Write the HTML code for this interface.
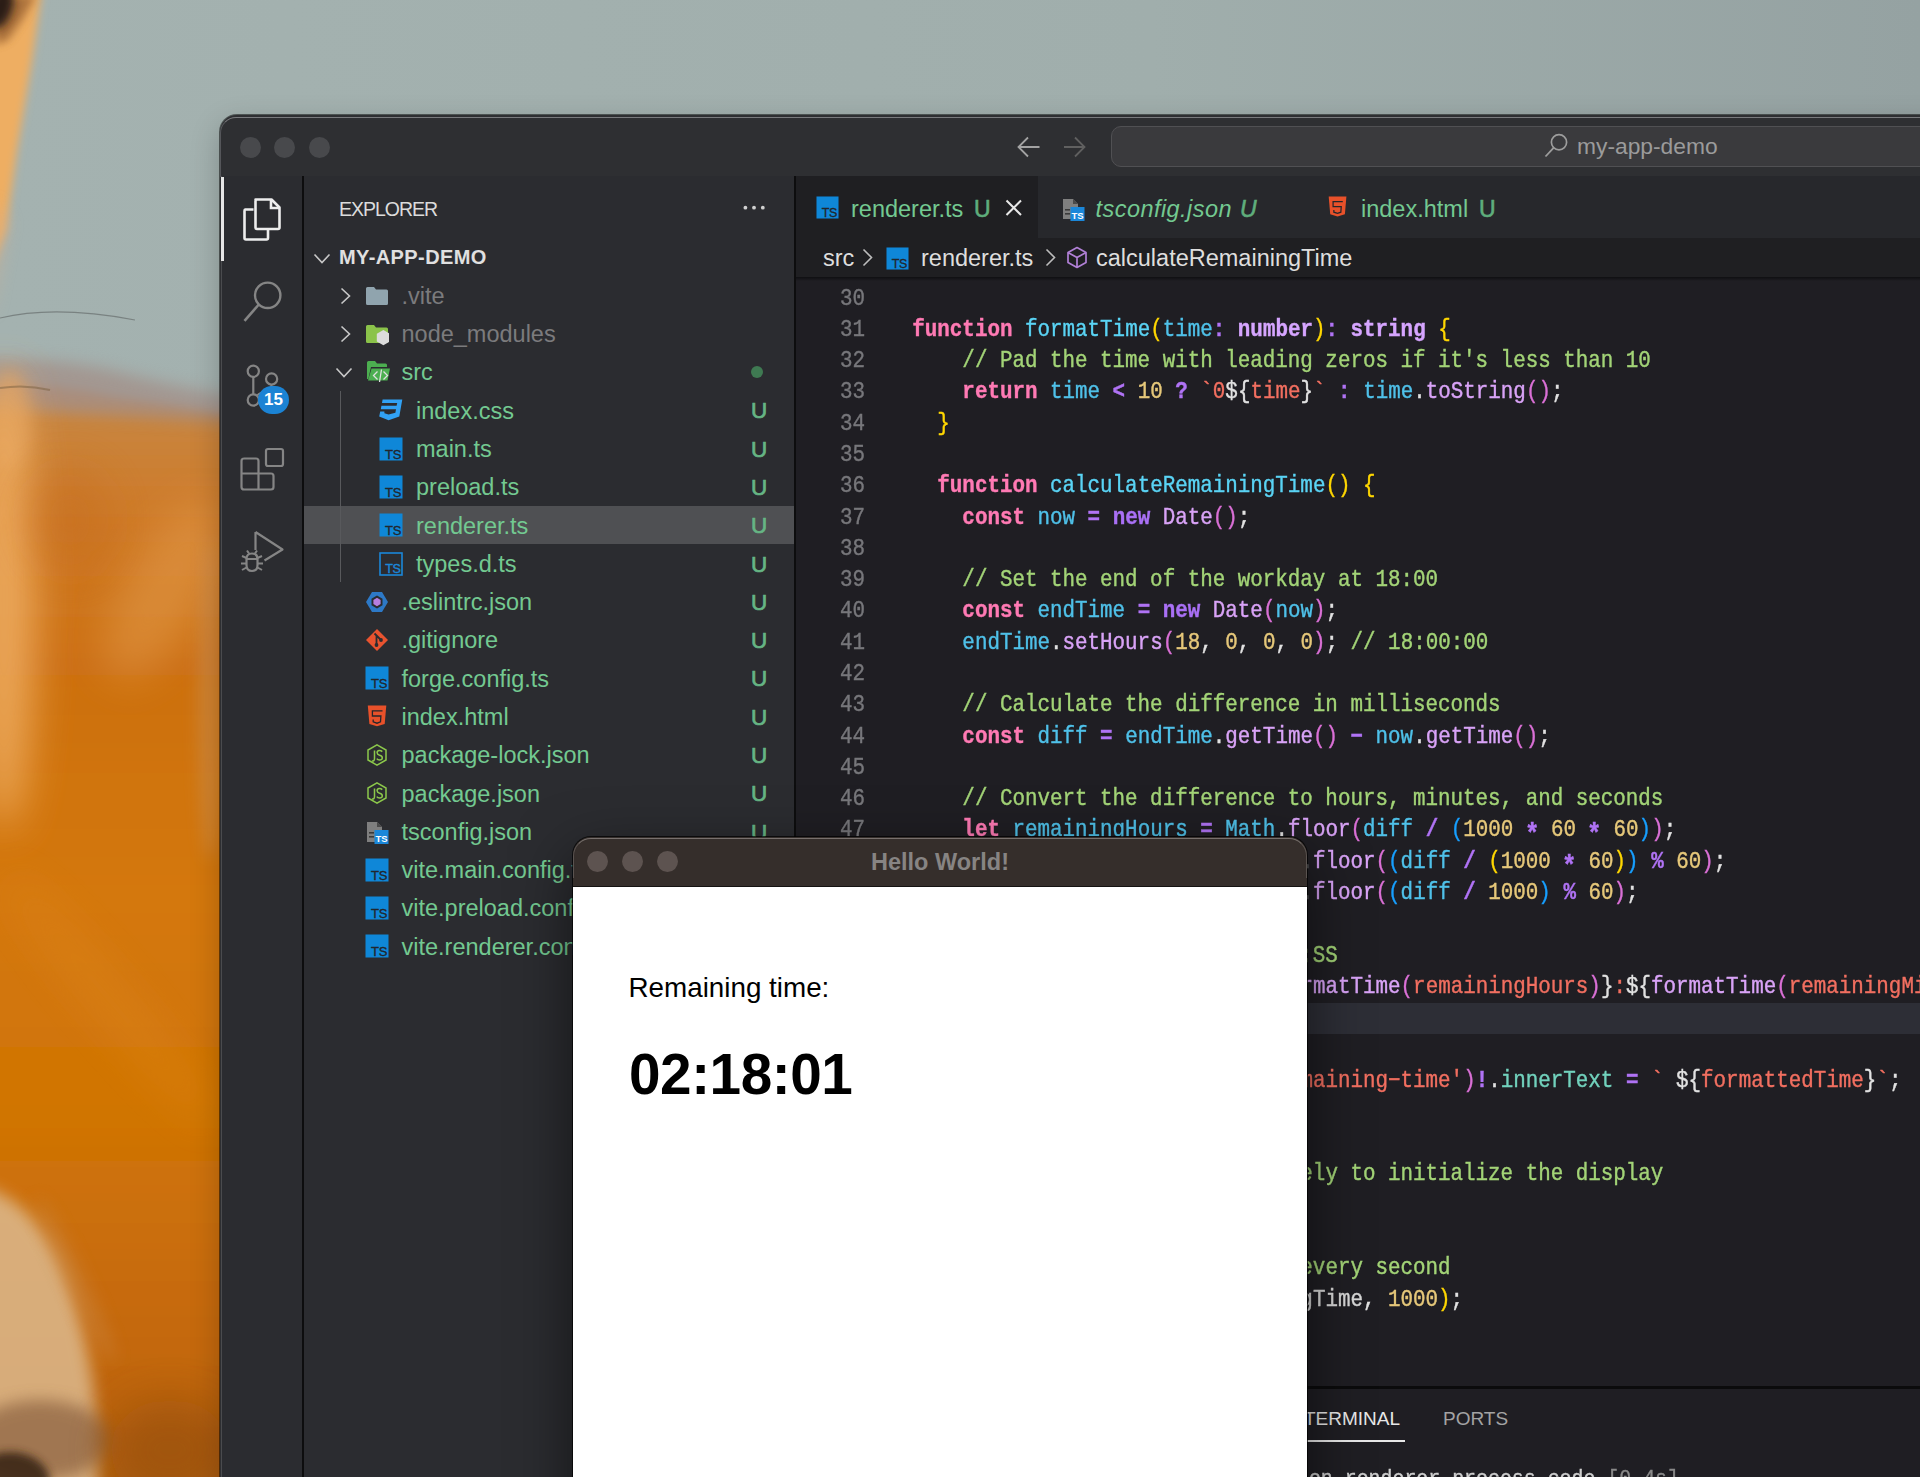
<!DOCTYPE html><html><head><meta charset="utf-8"><style>
*{margin:0;padding:0;box-sizing:border-box}
html,body{width:1920px;height:1477px;overflow:hidden;position:relative;font-family:"Liberation Sans",sans-serif;background:#a2b0ae}
.a{position:absolute}
.ui{font-family:"Liberation Sans",sans-serif;font-size:23.5px;white-space:pre;line-height:1}
.mono{font-family:"Liberation Mono",monospace;font-size:20.87px;white-space:pre;line-height:31.28px;transform:scaleY(1.15);transform-origin:0 21px;-webkit-text-stroke:0.35px currentColor}
.kw{color:#ff7ab4;font-weight:700}.nw{color:#a970f5;font-weight:700}.ty{color:#d6a5ff;font-weight:700}
.fn{color:#5ad4f5}.vr{color:#4fc1e9}.me{color:#d9a3f7}.cm{color:#a3d477}.nu{color:#e6c87a}.st{color:#f26f60}
.op{color:#b073f5;font-weight:700}.p1{color:#ffd700}.p2{color:#da70d6}.p3{color:#179fff}.w{color:#e2e2e2}.te{color:#72d2bd}.wh2{color:#d8d8d8}
.ln{color:#77777b;text-align:right;width:60px}
.gr{color:#73c991}
.ast{color:#b073f5;font-weight:700;display:inline-block;transform:translateY(4px) scale(1.15)}
</style></head><body>
<svg class="a" style="left:0;top:0" width="1920" height="1477" viewBox="0 0 1920 1477">
<defs>
<linearGradient id="sky" x1="0" y1="0" x2="1" y2="0"><stop offset="0" stop-color="#a4b2b0"/><stop offset="0.6" stop-color="#a0aeac"/><stop offset="1" stop-color="#95a2a2"/></linearGradient>
<linearGradient id="fur" x1="0" y1="0" x2="0" y2="1"><stop offset="0" stop-color="#b89478"/><stop offset="0.03" stop-color="#c8853f"/><stop offset="0.12" stop-color="#cf7a28"/><stop offset="0.25" stop-color="#cc7012"/><stop offset="0.45" stop-color="#d47808"/><stop offset="0.65" stop-color="#d07406"/><stop offset="0.85" stop-color="#c4680a"/><stop offset="1" stop-color="#a85a10"/></linearGradient>
<filter id="b8" x="-150%" y="-150%" width="400%" height="400%"><feGaussianBlur stdDeviation="8"/></filter>
<filter id="b20" x="-150%" y="-150%" width="400%" height="400%"><feGaussianBlur stdDeviation="20"/></filter>
<filter id="b4" x="-150%" y="-150%" width="400%" height="400%"><feGaussianBlur stdDeviation="4"/></filter>
</defs>
<rect width="1920" height="1477" fill="url(#sky)"/>
<path d="M-40 385 Q40 380 110 396 Q180 405 260 418 L260 1520 L-40 1520 Z" fill="url(#fur)" filter="url(#b4)"/>
<path d="M-40 360 Q60 355 130 375 Q200 392 260 400 L260 425 L-40 405 Z" fill="#a38e86" opacity="0.75" filter="url(#b8)"/><ellipse cx="10" cy="420" rx="20" ry="50" fill="#e0a060" opacity="0.6" filter="url(#b8)"/>
<ellipse cx="4" cy="600" rx="30" ry="230" fill="#efae64" opacity="0.9" filter="url(#b20)"/>
<ellipse cx="165" cy="590" rx="40" ry="100" fill="#e6a255" opacity="0.45" filter="url(#b20)" transform="rotate(30 165 590)"/>
<ellipse cx="70" cy="520" rx="40" ry="50" fill="#c46c1c" opacity="0.45" filter="url(#b20)"/>
<ellipse cx="110" cy="1000" rx="18" ry="160" fill="#e08a20" opacity="0.4" filter="url(#b20)" transform="rotate(-40 110 1000)"/>
<ellipse cx="210" cy="700" rx="12" ry="160" fill="#d49a60" opacity="0.45" filter="url(#b8)"/>
<path d="M-20 1185 Q30 1200 60 1260 Q85 1320 95 1400 L100 1520 L-20 1520 Z" fill="#dcb98e" opacity="0.85" filter="url(#b8)"/>
<ellipse cx="75" cy="1280" rx="10" ry="90" fill="#c98540" opacity="0.5" filter="url(#b8)" transform="rotate(-25 75 1280)"/>
<ellipse cx="40" cy="1440" rx="70" ry="40" fill="#8a6040" opacity="0.7" filter="url(#b8)"/>
<ellipse cx="10" cy="1482" rx="40" ry="30" fill="#3a2818" opacity="0.9" filter="url(#b4)"/>
<ellipse cx="170" cy="1450" rx="60" ry="50" fill="#96500e" opacity="0.6" filter="url(#b20)"/>
<path d="M-10 -10 L42 -10 L32 60 L17 150 L6 230 L-10 270 Z" fill="#eeae62" filter="url(#b4)"/><path d="M-10 200 L8 220 L-10 320 Z" fill="#d8ae88" opacity="0.5" filter="url(#b8)"/>
<path d="M-5 -5 L36 -5 L22 20 L8 40 L-5 45 Z" fill="#9a6230" opacity="0.8" filter="url(#b4)"/><ellipse cx="0" cy="8" rx="12" ry="22" fill="#2a1c12" filter="url(#b4)" transform="rotate(20 0 8)"/>
<path d="M0 318 Q55 305 135 320" stroke="#5e6362" stroke-width="1.2" fill="none" opacity="0.6"/>
<path d="M0 388 Q25 384 50 390" stroke="#7a6040" stroke-width="2" fill="none" opacity="0.5"/>
</svg>
<div class="a" style="left:220px;top:115px;width:1760px;height:1420px;border-radius:17px;background:#2e2f32;box-shadow:0 0 0 1px rgba(0,0,0,.5),0 10px 30px rgba(0,0,0,.22)"></div>
<div class="a" style="left:220px;top:116.5px;width:1760px;height:60px;border-radius:16px 0 0 0;border-top:1.5px solid #7a7b7e;border-left:1px solid #55565a"></div>
<div class="a" style="left:239.8px;top:136.9px;width:21px;height:21px;border-radius:50%;background:#48494c"></div>
<div class="a" style="left:274.3px;top:136.9px;width:21px;height:21px;border-radius:50%;background:#48494c"></div>
<div class="a" style="left:308.8px;top:136.9px;width:21px;height:21px;border-radius:50%;background:#48494c"></div>
<svg class="a" style="left:1010px;top:130px" width="90" height="34" viewBox="0 0 90 34"><path d="M9 17 H29.5 M18 7.5 L8.5 17 L18 26.5" stroke="#a3a3a3" stroke-width="1.8" fill="none"/><path d="M54 17 H74.5 M65 7.5 L74.5 17 L65 26.5" stroke="#606060" stroke-width="1.8" fill="none"/></svg>
<div class="a" style="left:1110.5px;top:125.6px;width:900px;height:41.2px;border-radius:10px;background:#3a3a3d;border:1.5px solid #505053"></div>
<svg class="a" style="left:1540px;top:130px" width="32" height="32" viewBox="0 0 32 32"><circle cx="19" cy="12.3" r="7.6" stroke="#9d9d9d" stroke-width="1.7" fill="none"/><path d="M13.6 17.8 L5.5 26.5" stroke="#9d9d9d" stroke-width="1.8"/></svg>
<div class="a ui" style="left:1577px;top:134.5px;font-size:22.8px;color:#9b9b9b">my-app-demo</div>
<div class="a" style="left:221px;top:175.5px;width:1700px;height:1px;background:#252629"></div>
<div class="a" style="left:221px;top:176px;width:81px;height:1310px;background:#2b2c30"></div>
<div class="a" style="left:221px;top:176px;width:1px;height:1310px;background:#4a4b4e"></div>
<div class="a" style="left:302px;top:176px;width:2px;height:1310px;background:#0d0d0e"></div>
<div class="a" style="left:221px;top:177px;width:3px;height:84px;background:#e6e6e6"></div>
<svg class="a" style="left:236px;top:192px" width="52" height="54" viewBox="0 0 52 54"><path d="M9 17.5 H17.5 M9 17.5 Q8.5 17.5 8.5 19 V46 Q8.5 47.5 10 47.5 H30.5 Q32 47.5 32 46 V37.5" stroke="#ededed" stroke-width="2.6" fill="none"/><path d="M19.5 7.5 H35.5 L43.5 15.5 V35.5 Q43.5 37 42 37 H21 Q19.5 37 19.5 35.5 V9 Q19.5 7.5 21 7.5 Z" stroke="#ededed" stroke-width="2.6" fill="none" stroke-linejoin="round"/><path d="M35 8 V16 H43" stroke="#ededed" stroke-width="2.6" fill="none"/></svg>
<svg class="a" style="left:236px;top:272px" width="52" height="56" viewBox="0 0 52 56"><circle cx="31.7" cy="23.3" r="12.7" stroke="#858585" stroke-width="2.4" fill="none"/><path d="M22.8 32.5 L8.5 48.8" stroke="#858585" stroke-width="2.6"/></svg>
<svg class="a" style="left:236px;top:356px" width="60" height="64" viewBox="0 0 60 64"><circle cx="17.3" cy="15.3" r="5.6" stroke="#858585" stroke-width="2.2" fill="none"/><circle cx="35.6" cy="22.9" r="5.6" stroke="#858585" stroke-width="2.2" fill="none"/><circle cx="17.3" cy="44" r="5.6" stroke="#858585" stroke-width="2.2" fill="none"/><path d="M17.3 21 V38.4 M35.6 28.5 Q35.6 34 28 36 Q21 38 21.5 40" stroke="#858585" stroke-width="2.2" fill="none"/></svg>
<div class="a" style="left:258px;top:385.5px;width:31px;height:28px;border-radius:14px;background:#1b83d4"></div>
<div class="a" style="left:258px;top:389px;width:31px;text-align:center;font-size:17px;font-weight:700;color:#fff;line-height:21px">15</div>
<svg class="a" style="left:236px;top:444px" width="52" height="52" viewBox="0 0 52 52"><rect x="30" y="5" width="17" height="17" rx="2" stroke="#858585" stroke-width="2.2" fill="none"/><path d="M7.5 14.5 H20 Q22.5 14.5 22.5 17 V29.5 H35 Q37.5 29.5 37.5 32 V43 Q37.5 45.5 35 45.5 H8 Q5.5 45.5 5.5 43 V17 Q5.5 14.5 8 14.5 Z M5.5 29.5 H22.5 V45.5" stroke="#858585" stroke-width="2.2" fill="none"/></svg>
<svg class="a" style="left:236px;top:526px" width="56" height="56" viewBox="0 0 56 56"><path d="M19.5 6 L46.5 23.5 L28.5 34.5 M19.5 6 V24" stroke="#858585" stroke-width="2.2" fill="none" stroke-linejoin="round"/><path d="M10.5 33 Q10.5 27.5 16 27.5 Q21.5 27.5 21.5 33 V39 Q21.5 45 16 45 Q10.5 45 10.5 39 Z" stroke="#858585" stroke-width="2.2" fill="none"/><path d="M10.5 33 H21.5 M6 30 L10.5 32 M6 44 L10.5 41.5 M26 30 L21.5 32 M26 44 L21.5 41.5 M5 37.5 H10.5 M21.5 37.5 H27 M13 27.5 L11 24.5 M19 27.5 L21 24.5" stroke="#858585" stroke-width="2" fill="none"/></svg>
<div class="a" style="left:304px;top:176px;width:490px;height:1310px;background:#2b2c30"></div>
<div class="a" style="left:794px;top:176px;width:2px;height:1310px;background:#0d0d0e"></div>
<div class="a ui" style="left:339px;top:199.5px;font-size:19.5px;letter-spacing:-1px;color:#dcdcdc">EXPLORER</div>
<svg class="a" style="left:735px;top:198px" width="40" height="20" viewBox="0 0 40 20"><circle cx="10.4" cy="9.7" r="1.9" fill="#d0d0d0"/><circle cx="19" cy="9.7" r="1.9" fill="#d0d0d0"/><circle cx="27.8" cy="9.7" r="1.9" fill="#d0d0d0"/></svg>
<div class="a" style="left:304px;top:505.8px;width:490px;height:38px;background:#4f5053"></div>
<div class="a" style="left:339.5px;top:391px;width:1.2px;height:191px;background:#58595c"></div>
<svg class="a" style="left:312.5px;top:252.8px" width="20" height="12" viewBox="0 0 20 12"><path d="M1.5 1.5 L9 9.5 L16.5 1.5" stroke="#c8c8c8" stroke-width="1.6" fill="none"/></svg>
<div class="a ui" style="left:339px;top:247.3px;font-size:20px;font-weight:700;letter-spacing:0.4px;color:#e0e0e0">MY-APP-DEMO</div>
<svg class="a" style="left:339.5px;top:286.58000000000004px" width="12" height="20" viewBox="0 0 12 20"><path d="M1.5 1.5 L9.5 9 L1.5 16.5" stroke="#c8c8c8" stroke-width="1.6" fill="none"/></svg>
<svg class="a" style="left:365px;top:283.58000000000004px" width="24" height="24" viewBox="0 0 24 24"><path d="M1 4.5 Q1 3 2.5 3 H9 L11 5.5 H21.5 Q23 5.5 23 7 V19.5 Q23 21 21.5 21 H2.5 Q1 21 1 19.5 Z" fill="#90a4ae"/></svg>
<div class="a ui" style="left:401.5px;top:284.88000000000005px;color:#7b7b7d">.vite</div>
<svg class="a" style="left:339.5px;top:324.86px" width="12" height="20" viewBox="0 0 12 20"><path d="M1.5 1.5 L9.5 9 L1.5 16.5" stroke="#c8c8c8" stroke-width="1.6" fill="none"/></svg>
<svg class="a" style="left:365px;top:321.86px" width="24" height="24" viewBox="0 0 24 24"><path d="M1 4.5 Q1 3 2.5 3 H9 L11 5.5 H21.5 Q23 5.5 23 7 V19.5 Q23 21 21.5 21 H2.5 Q1 21 1 19.5 Z" fill="#8bc34a"/><path d="M18.4 7.9 L25 11.75 V19.45 L18.4 23.3 L11.8 19.45 V11.75 Z" fill="#dcdcdc"/></svg>
<div class="a ui" style="left:401.5px;top:323.16px;color:#7b7b7d">node_modules</div>
<svg class="a" style="left:334.5px;top:367.14px" width="20" height="12" viewBox="0 0 20 12"><path d="M1.5 1.5 L9 9.5 L16.5 1.5" stroke="#c8c8c8" stroke-width="1.6" fill="none"/></svg>
<svg class="a" style="left:366px;top:360.14px" width="24" height="24" viewBox="0 0 24 24"><path d="M1 2.5 Q1 1 2.5 1 H9 L11 3.5 H19.5 Q21 3.5 21 5 V7 H5 L2.3 19 H1 Z" fill="#4caf50"/><path d="M5.5 8.5 H24 L21.5 20.5 H2 Z" fill="#4caf50"/><path d="M11.5 11.5 L7.5 15.5 L11.5 19.5 M17.5 11.5 L21.5 15.5 L17.5 19.5 M15.5 9.5 L13.5 22" stroke="#e0e0e0" stroke-width="1.3" fill="none"/></svg>
<div class="a ui" style="left:401.5px;top:361.44px;color:#73c991">src</div>
<div class="a" style="left:751px;top:365.64px;width:12px;height:12px;border-radius:50%;background:#3f7a52"></div>
<svg class="a" style="left:379px;top:398.42px" width="24" height="24" viewBox="0 0 24 24"><path d="M3.6 1.4 H23.3 L20.3 18.6 L9.6 22.2 L0.2 18.6 L1.2 13.6 H5.4 L5.4 15.2 L9.6 16.6 L16.4 14.8 L17 11.2 H1.8 L2.4 7.8 H17.6 L18.2 4.9 H3 Z" fill="#31a2f5"/></svg>
<div class="a ui" style="left:416px;top:399.72px;color:#73c991">index.css</div>
<div class="a ui" style="left:751px;top:400.42px;color:#66b584;font-size:22.5px;-webkit-text-stroke:0.7px #66b584">U</div>
<svg class="a" style="left:379px;top:436.70000000000005px" width="24" height="24" viewBox="0 0 24 24"><rect x="0.5" y="0.5" width="23" height="23" fill="#0f87d8"/><text x="22" y="21.8" text-anchor="end" font-family="Liberation Sans" font-size="13" fill="#22262c" stroke="#22262c" stroke-width="0.35" letter-spacing="-0.3">TS</text></svg>
<div class="a ui" style="left:416px;top:438.00000000000006px;color:#73c991">main.ts</div>
<div class="a ui" style="left:751px;top:438.70000000000005px;color:#66b584;font-size:22.5px;-webkit-text-stroke:0.7px #66b584">U</div>
<svg class="a" style="left:379px;top:474.98px" width="24" height="24" viewBox="0 0 24 24"><rect x="0.5" y="0.5" width="23" height="23" fill="#0f87d8"/><text x="22" y="21.8" text-anchor="end" font-family="Liberation Sans" font-size="13" fill="#22262c" stroke="#22262c" stroke-width="0.35" letter-spacing="-0.3">TS</text></svg>
<div class="a ui" style="left:416px;top:476.28000000000003px;color:#73c991">preload.ts</div>
<div class="a ui" style="left:751px;top:476.98px;color:#66b584;font-size:22.5px;-webkit-text-stroke:0.7px #66b584">U</div>
<svg class="a" style="left:379px;top:513.26px" width="24" height="24" viewBox="0 0 24 24"><rect x="0.5" y="0.5" width="23" height="23" fill="#0f87d8"/><text x="22" y="21.8" text-anchor="end" font-family="Liberation Sans" font-size="13" fill="#22262c" stroke="#22262c" stroke-width="0.35" letter-spacing="-0.3">TS</text></svg>
<div class="a ui" style="left:416px;top:514.56px;color:#73c991">renderer.ts</div>
<div class="a ui" style="left:751px;top:515.26px;color:#66b584;font-size:22.5px;-webkit-text-stroke:0.7px #66b584">U</div>
<svg class="a" style="left:379px;top:551.54px" width="24" height="24" viewBox="0 0 24 24"><rect x="1" y="1" width="22" height="22" fill="none" stroke="#1b87d9" stroke-width="1.6"/><text x="21.5" y="21" text-anchor="end" font-family="Liberation Sans" font-size="12.5" fill="#1b87d9" stroke="#1b87d9" stroke-width="0.4" letter-spacing="-0.3">TS</text></svg>
<div class="a ui" style="left:416px;top:552.8399999999999px;color:#73c991">types.d.ts</div>
<div class="a ui" style="left:751px;top:553.54px;color:#66b584;font-size:22.5px;-webkit-text-stroke:0.7px #66b584">U</div>
<svg class="a" style="left:365px;top:589.8199999999999px" width="24" height="24" viewBox="0 0 24 24"><path d="M7 2 H17 L23 12 L17 22 H7 L1 12 Z" fill="#2d79c7"/><path d="M12 5.5 L17.5 8.7 V15.3 L12 18.5 L6.5 15.3 V8.7 Z" fill="#2b2c30"/><path d="M12 7.8 L15.6 9.9 V14.1 L12 16.2 L8.4 14.1 V9.9 Z" fill="#b67ee0"/></svg>
<div class="a ui" style="left:401.5px;top:591.1199999999999px;color:#73c991">.eslintrc.json</div>
<div class="a ui" style="left:751px;top:591.8199999999999px;color:#66b584;font-size:22.5px;-webkit-text-stroke:0.7px #66b584">U</div>
<svg class="a" style="left:365px;top:628.1px" width="24" height="24" viewBox="0 0 24 24"><path d="M12 1 L23 12 L12 23 L1 12 Z" fill="#e8532f"/><path d="M9.5 5.5 L11.5 7.5 M11.5 7.5 V17 M11.5 7.5 L16 12" stroke="#2b2c30" stroke-width="1.8" fill="none"/><circle cx="11.5" cy="17" r="1.9" fill="#2b2c30"/><circle cx="16" cy="12" r="1.9" fill="#2b2c30"/></svg>
<div class="a ui" style="left:401.5px;top:629.4px;color:#73c991">.gitignore</div>
<div class="a ui" style="left:751px;top:630.1px;color:#66b584;font-size:22.5px;-webkit-text-stroke:0.7px #66b584">U</div>
<svg class="a" style="left:365px;top:666.3800000000001px" width="24" height="24" viewBox="0 0 24 24"><rect x="0.5" y="0.5" width="23" height="23" fill="#0f87d8"/><text x="22" y="21.8" text-anchor="end" font-family="Liberation Sans" font-size="13" fill="#22262c" stroke="#22262c" stroke-width="0.35" letter-spacing="-0.3">TS</text></svg>
<div class="a ui" style="left:401.5px;top:667.6800000000001px;color:#73c991">forge.config.ts</div>
<div class="a ui" style="left:751px;top:668.3800000000001px;color:#66b584;font-size:22.5px;-webkit-text-stroke:0.7px #66b584">U</div>
<svg class="a" style="left:365px;top:704.6600000000001px" width="24" height="24" viewBox="0 0 24 24"><path d="M2.8 0.5 H21.3 L19.7 19 L12 21.3 L4.4 19 Z" fill="#e8512a"/><path d="M17.5 5.9 H7.4 V11 H15.9 L15.5 16.9 L12 18.2 L8.2 16.9 V14.5" stroke="#24262b" stroke-width="1.3" fill="none"/></svg>
<div class="a ui" style="left:401.5px;top:705.96px;color:#73c991">index.html</div>
<div class="a ui" style="left:751px;top:706.6600000000001px;color:#66b584;font-size:22.5px;-webkit-text-stroke:0.7px #66b584">U</div>
<svg class="a" style="left:365px;top:742.94px" width="24" height="24" viewBox="0 0 24 24"><path d="M12 1.8 L21 7 V17 L12 22.2 L3 17 V7 Z" fill="none" stroke="#8cc84b" stroke-width="1.5"/><path d="M9.5 7.5 V15.5 Q9.5 18.5 6.8 18" stroke="#8cc84b" stroke-width="1.5" fill="none"/><path d="M17.3 8.6 Q16 7.5 14.2 7.6 Q12 7.8 12.1 9.8 Q12.2 11.6 14.6 12.2 Q17.4 12.9 17.3 15 Q17.2 17 14.6 17 Q12.6 17 11.8 15.6" stroke="#8cc84b" stroke-width="1.5" fill="none"/></svg>
<div class="a ui" style="left:401.5px;top:744.24px;color:#73c991">package-lock.json</div>
<div class="a ui" style="left:751px;top:744.94px;color:#66b584;font-size:22.5px;-webkit-text-stroke:0.7px #66b584">U</div>
<svg class="a" style="left:365px;top:781.22px" width="24" height="24" viewBox="0 0 24 24"><path d="M12 1.8 L21 7 V17 L12 22.2 L3 17 V7 Z" fill="none" stroke="#8cc84b" stroke-width="1.5"/><path d="M9.5 7.5 V15.5 Q9.5 18.5 6.8 18" stroke="#8cc84b" stroke-width="1.5" fill="none"/><path d="M17.3 8.6 Q16 7.5 14.2 7.6 Q12 7.8 12.1 9.8 Q12.2 11.6 14.6 12.2 Q17.4 12.9 17.3 15 Q17.2 17 14.6 17 Q12.6 17 11.8 15.6" stroke="#8cc84b" stroke-width="1.5" fill="none"/></svg>
<div class="a ui" style="left:401.5px;top:782.52px;color:#73c991">package.json</div>
<div class="a ui" style="left:751px;top:783.22px;color:#66b584;font-size:22.5px;-webkit-text-stroke:0.7px #66b584">U</div>
<svg class="a" style="left:365px;top:819.5px" width="24" height="24" viewBox="0 0 24 24"><path d="M2 2 H12 L17 7 V22 H2 Z" fill="#7f7f7f"/><path d="M12 2 V7 H17" fill="#4a4a4a"/><rect x="4" y="12" width="5" height="1.6" fill="#3a3a3a"/><rect x="4" y="16" width="5" height="1.6" fill="#3a3a3a"/><rect x="9.5" y="10" width="14" height="14" fill="#1b87d9"/><text x="16.5" y="21.5" text-anchor="middle" font-family="Liberation Sans" font-size="9.5" font-weight="700" fill="#fff">TS</text></svg>
<div class="a ui" style="left:401.5px;top:820.8px;color:#73c991">tsconfig.json</div>
<div class="a ui" style="left:751px;top:821.5px;color:#66b584;font-size:22.5px;-webkit-text-stroke:0.7px #66b584">U</div>
<svg class="a" style="left:365px;top:857.78px" width="24" height="24" viewBox="0 0 24 24"><rect x="0.5" y="0.5" width="23" height="23" fill="#0f87d8"/><text x="22" y="21.8" text-anchor="end" font-family="Liberation Sans" font-size="13" fill="#22262c" stroke="#22262c" stroke-width="0.35" letter-spacing="-0.3">TS</text></svg>
<div class="a ui" style="left:401.5px;top:859.0799999999999px;color:#73c991">vite.main.config.ts</div>
<div class="a ui" style="left:751px;top:859.78px;color:#66b584;font-size:22.5px;-webkit-text-stroke:0.7px #66b584">U</div>
<svg class="a" style="left:365px;top:896.06px" width="24" height="24" viewBox="0 0 24 24"><rect x="0.5" y="0.5" width="23" height="23" fill="#0f87d8"/><text x="22" y="21.8" text-anchor="end" font-family="Liberation Sans" font-size="13" fill="#22262c" stroke="#22262c" stroke-width="0.35" letter-spacing="-0.3">TS</text></svg>
<div class="a ui" style="left:401.5px;top:897.3599999999999px;color:#73c991">vite.preload.config.ts</div>
<div class="a ui" style="left:751px;top:898.06px;color:#66b584;font-size:22.5px;-webkit-text-stroke:0.7px #66b584">U</div>
<svg class="a" style="left:365px;top:934.3399999999999px" width="24" height="24" viewBox="0 0 24 24"><rect x="0.5" y="0.5" width="23" height="23" fill="#0f87d8"/><text x="22" y="21.8" text-anchor="end" font-family="Liberation Sans" font-size="13" fill="#22262c" stroke="#22262c" stroke-width="0.35" letter-spacing="-0.3">TS</text></svg>
<div class="a ui" style="left:401.5px;top:935.6399999999999px;color:#73c991">vite.renderer.config.ts</div>
<div class="a ui" style="left:751px;top:936.3399999999999px;color:#66b584;font-size:22.5px;-webkit-text-stroke:0.7px #66b584">U</div>
<div class="a" style="left:796px;top:176px;width:1124px;height:1310px;background:#1f1e23"></div>
<div class="a" style="left:796px;top:176px;width:1124px;height:62px;background:#27282c"></div>
<div class="a" style="left:796px;top:176px;width:242px;height:62px;background:#1f1f22"></div>
<svg class="a" style="left:815.5px;top:196px" width="23" height="23" viewBox="0 0 24 24"><rect x="0.5" y="0.5" width="23" height="23" fill="#0f87d8"/><text x="22" y="21.8" text-anchor="end" font-family="Liberation Sans" font-size="13" fill="#22262c" stroke="#22262c" stroke-width="0.35" letter-spacing="-0.3">TS</text></svg>
<div class="a ui" style="left:851px;top:197.5px;color:#73c991">renderer.ts</div>
<div class="a ui" style="left:974px;top:197.5px;color:#5fae7c;font-size:23px;-webkit-text-stroke:0.6px #5fae7c">U</div>
<svg class="a" style="left:1004px;top:198px" width="20" height="20" viewBox="0 0 20 20"><path d="M2.5 2.5 L17 17 M17 2.5 L2.5 17" stroke="#e8e8e8" stroke-width="2"/></svg>
<svg class="a" style="left:1060.5px;top:196.5px" width="24" height="24" viewBox="0 0 24 24"><path d="M2 2 H12 L17 7 V22 H2 Z" fill="#7f7f7f"/><path d="M12 2 V7 H17" fill="#4a4a4a"/><rect x="4" y="12" width="5" height="1.6" fill="#3a3a3a"/><rect x="4" y="16" width="5" height="1.6" fill="#3a3a3a"/><rect x="9.5" y="10" width="14" height="14" fill="#1b87d9"/><text x="16.5" y="21.5" text-anchor="middle" font-family="Liberation Sans" font-size="9.5" font-weight="700" fill="#fff">TS</text></svg>
<div class="a ui" style="left:1095.5px;top:197.5px;color:#73c991;font-style:italic;letter-spacing:0.45px">tsconfig.json</div>
<div class="a ui" style="left:1240px;top:197.5px;color:#5fae7c;font-size:23px;-webkit-text-stroke:0.6px #5fae7c;font-style:italic">U</div>
<svg class="a" style="left:1326px;top:196px" width="23" height="23" viewBox="0 0 24 24"><path d="M2.8 0.5 H21.3 L19.7 19 L12 21.3 L4.4 19 Z" fill="#e8512a"/><path d="M17.5 5.9 H7.4 V11 H15.9 L15.5 16.9 L12 18.2 L8.2 16.9 V14.5" stroke="#24262b" stroke-width="1.3" fill="none"/></svg>
<div class="a ui" style="left:1361px;top:197.5px;color:#73c991">index.html</div>
<div class="a ui" style="left:1479px;top:197.5px;color:#5fae7c;font-size:23px;-webkit-text-stroke:0.6px #5fae7c">U</div>
<div class="a" style="left:796px;top:238px;width:1124px;height:39px;background:#1f1f22"></div>
<div class="a ui" style="left:823px;top:247px;color:#dedede">src</div>
<svg class="a" style="left:862px;top:248px" width="12" height="20" viewBox="0 0 12 20"><path d="M1.5 1.5 L9.5 9.5 L1.5 17.5" stroke="#bdbdbd" stroke-width="1.6" fill="none"/></svg>
<svg class="a" style="left:886px;top:246.5px" width="23" height="23" viewBox="0 0 24 24"><rect x="0.5" y="0.5" width="23" height="23" fill="#0f87d8"/><text x="22" y="21.8" text-anchor="end" font-family="Liberation Sans" font-size="13" fill="#22262c" stroke="#22262c" stroke-width="0.35" letter-spacing="-0.3">TS</text></svg>
<div class="a ui" style="left:921px;top:247px;color:#dedede">renderer.ts</div>
<svg class="a" style="left:1045px;top:248px" width="12" height="20" viewBox="0 0 12 20"><path d="M1.5 1.5 L9.5 9.5 L1.5 17.5" stroke="#bdbdbd" stroke-width="1.6" fill="none"/></svg>
<svg class="a" style="left:1065px;top:245px" width="24" height="26" viewBox="0 0 24 26"><path d="M12 2.5 L21 7.5 V17.5 L12 22.5 L3 17.5 V7.5 Z M3 7.5 L12 12.5 L21 7.5 M12 12.5 V22.5" stroke="#b180d7" stroke-width="1.7" fill="none" stroke-linejoin="round"/></svg>
<div class="a ui" style="left:1096px;top:247px;color:#dedede">calculateRemainingTime</div>
<div class="a" style="left:796px;top:277px;width:1124px;height:4px;background:linear-gradient(#0f0f12,rgba(31,30,35,0))"></div>
<div class="a" style="left:880px;top:1003.08px;width:1040px;height:31.28px;background:#2d2e36"></div>
<div class="a mono ln" style="left:805px;top:283.64px">30</div>
<div class="a mono ln" style="left:805px;top:314.92px">31</div>
<div class="a mono" style="left:912.3px;top:314.92px"><span class="kw">function</span><span class="w"> </span><span class="fn">formatTime</span><span class="p1">(</span><span class="vr">time</span><span class="op">:</span><span class="w"> </span><span class="ty">number</span><span class="p1">)</span><span class="op">:</span><span class="w"> </span><span class="ty">string</span><span class="w"> </span><span class="p1">{</span></div>
<div class="a mono ln" style="left:805px;top:346.20000000000005px">32</div>
<div class="a mono" style="left:962.372px;top:346.20000000000005px"><span class="cm">// Pad the time with leading zeros if it's less than 10</span></div>
<div class="a mono ln" style="left:805px;top:377.48px">33</div>
<div class="a mono" style="left:962.372px;top:377.48px"><span class="kw">return</span><span class="w"> </span><span class="vr">time</span><span class="w"> </span><span class="op">&lt;</span><span class="w"> </span><span class="nu">10</span><span class="w"> </span><span class="op">?</span><span class="w"> </span><span class="st">`0</span><span class="w">${</span><span class="st">time</span><span class="w">}</span><span class="st">`</span><span class="w"> </span><span class="op">:</span><span class="w"> </span><span class="vr">time</span><span class="w">.</span><span class="me">toString</span><span class="p2">()</span><span class="w">;</span></div>
<div class="a mono ln" style="left:805px;top:408.76px">34</div>
<div class="a mono" style="left:937.336px;top:408.76px"><span class="p1">}</span></div>
<div class="a mono ln" style="left:805px;top:440.04px">35</div>
<div class="a mono ln" style="left:805px;top:471.32000000000005px">36</div>
<div class="a mono" style="left:937.336px;top:471.32000000000005px"><span class="kw">function</span><span class="w"> </span><span class="fn">calculateRemainingTime</span><span class="p1">()</span><span class="w"> </span><span class="p1">{</span></div>
<div class="a mono ln" style="left:805px;top:502.6px">37</div>
<div class="a mono" style="left:962.372px;top:502.6px"><span class="kw">const</span><span class="w"> </span><span class="vr">now</span><span class="w"> </span><span class="op">=</span><span class="w"> </span><span class="nw">new</span><span class="w"> </span><span class="me">Date</span><span class="p2">()</span><span class="w">;</span></div>
<div class="a mono ln" style="left:805px;top:533.88px">38</div>
<div class="a mono ln" style="left:805px;top:565.1600000000001px">39</div>
<div class="a mono" style="left:962.372px;top:565.1600000000001px"><span class="cm">// Set the end of the workday at 18:00</span></div>
<div class="a mono ln" style="left:805px;top:596.44px">40</div>
<div class="a mono" style="left:962.372px;top:596.44px"><span class="kw">const</span><span class="w"> </span><span class="vr">endTime</span><span class="w"> </span><span class="op">=</span><span class="w"> </span><span class="nw">new</span><span class="w"> </span><span class="me">Date</span><span class="p2">(</span><span class="vr">now</span><span class="p2">)</span><span class="w">;</span></div>
<div class="a mono ln" style="left:805px;top:627.72px">41</div>
<div class="a mono" style="left:962.372px;top:627.72px"><span class="vr">endTime</span><span class="w">.</span><span class="me">setHours</span><span class="p2">(</span><span class="nu">18</span><span class="w">, </span><span class="nu">0</span><span class="w">, </span><span class="nu">0</span><span class="w">, </span><span class="nu">0</span><span class="p2">)</span><span class="w">; </span><span class="cm">// 18:00:00</span></div>
<div class="a mono ln" style="left:805px;top:659.0px">42</div>
<div class="a mono ln" style="left:805px;top:690.28px">43</div>
<div class="a mono" style="left:962.372px;top:690.28px"><span class="cm">// Calculate the difference in milliseconds</span></div>
<div class="a mono ln" style="left:805px;top:721.5600000000001px">44</div>
<div class="a mono" style="left:962.372px;top:721.5600000000001px"><span class="kw">const</span><span class="w"> </span><span class="vr">diff</span><span class="w"> </span><span class="op">=</span><span class="w"> </span><span class="vr">endTime</span><span class="w">.</span><span class="me">getTime</span><span class="p2">()</span><span class="w"> </span><span class="op">−</span><span class="w"> </span><span class="vr">now</span><span class="w">.</span><span class="me">getTime</span><span class="p2">()</span><span class="w">;</span></div>
<div class="a mono ln" style="left:805px;top:752.84px">45</div>
<div class="a mono ln" style="left:805px;top:784.12px">46</div>
<div class="a mono" style="left:962.372px;top:784.12px"><span class="cm">// Convert the difference to hours, minutes, and seconds</span></div>
<div class="a mono ln" style="left:805px;top:815.4000000000001px">47</div>
<div class="a mono" style="left:962.372px;top:815.4000000000001px"><span class="kw">let</span><span class="w"> </span><span class="vr">remainingHours</span><span class="w"> </span><span class="op">=</span><span class="w"> </span><span class="vr">Math</span><span class="w">.</span><span class="me">floor</span><span class="p2">(</span><span class="vr">diff</span><span class="w"> </span><span class="op">/</span><span class="w"> </span><span class="p3">(</span><span class="nu">1000</span><span class="w"> </span><span class="ast">*</span><span class="w"> </span><span class="nu">60</span><span class="w"> </span><span class="ast">*</span><span class="w"> </span><span class="nu">60</span><span class="p3">)</span><span class="p2">)</span><span class="w">;</span></div>
<div class="a mono ln" style="left:805px;top:846.6800000000001px">48</div>
<div class="a mono" style="left:962.372px;top:846.6800000000001px"><span class="kw">let</span><span class="w"> </span><span class="vr">remainingMinutes</span><span class="w"> </span><span class="op">=</span><span class="w"> </span><span class="vr">Math</span><span class="w">.</span><span class="me">floor</span><span class="p2">(</span><span class="p3">(</span><span class="vr">diff</span><span class="w"> </span><span class="op">/</span><span class="w"> </span><span class="p1">(</span><span class="nu">1000</span><span class="w"> </span><span class="ast">*</span><span class="w"> </span><span class="nu">60</span><span class="p1">)</span><span class="p3">)</span><span class="w"> </span><span class="op">%</span><span class="w"> </span><span class="nu">60</span><span class="p2">)</span><span class="w">;</span></div>
<div class="a mono ln" style="left:805px;top:877.96px">49</div>
<div class="a mono" style="left:962.372px;top:877.96px"><span class="kw">let</span><span class="w"> </span><span class="vr">remainingSeconds</span><span class="w"> </span><span class="op">=</span><span class="w"> </span><span class="vr">Math</span><span class="w">.</span><span class="me">floor</span><span class="p2">(</span><span class="p3">(</span><span class="vr">diff</span><span class="w"> </span><span class="op">/</span><span class="w"> </span><span class="nu">1000</span><span class="p3">)</span><span class="w"> </span><span class="op">%</span><span class="w"> </span><span class="nu">60</span><span class="p2">)</span><span class="w">;</span></div>
<div class="a mono ln" style="left:805px;top:909.24px">50</div>
<div class="a mono ln" style="left:805px;top:940.52px">51</div>
<div class="a mono" style="left:962.372px;top:940.52px"><span class="cm">// Format the time as HH:MM:SS</span></div>
<div class="a mono ln" style="left:805px;top:971.8000000000001px">52</div>
<div class="a mono" style="left:962.372px;top:971.8000000000001px"><span class="kw">const</span><span class="w"> </span><span class="vr">formattedTime</span><span class="w"> </span><span class="op">=</span><span class="w"> </span><span class="st">`</span><span class="w">${</span><span class="me">formatTime</span><span class="p2">(</span><span class="st">remainingHours</span><span class="p2">)</span><span class="w">}</span><span class="st">:</span><span class="w">${</span><span class="me">formatTime</span><span class="p2">(</span><span class="st">remainingMinutes</span><span class="p2">)</span><span class="w">}</span><span class="st">:</span><span class="w">${</span><span class="me">formatTime</span><span class="p2">(</span><span class="st">remainingSeconds</span><span class="p2">)</span><span class="w">}</span><span class="st">`</span><span class="w">;</span></div>
<div class="a mono ln" style="left:805px;top:1003.08px">53</div>
<div class="a mono ln" style="left:805px;top:1034.3600000000001px">54</div>
<div class="a mono ln" style="left:805px;top:1065.6399999999999px">55</div>
<div class="a mono" style="left:962.372px;top:1065.6399999999999px"><span class="vr">document</span><span class="w">.</span><span class="me">getElementById</span><span class="p2">(</span><span class="st">'remaining−time'</span><span class="p2">)</span><span class="op">!</span><span class="w">.</span><span class="te">innerText</span><span class="w"> </span><span class="op">=</span><span class="w"> </span><span class="st">`</span><span class="w"> ${</span><span class="st">formattedTime</span><span class="w">}</span><span class="st">`</span><span class="w">;</span></div>
<div class="a mono ln" style="left:805px;top:1096.92px">56</div>
<div class="a mono" style="left:937.336px;top:1096.92px"><span class="p1">}</span></div>
<div class="a mono ln" style="left:805px;top:1128.2px">57</div>
<div class="a mono ln" style="left:805px;top:1159.48px">58</div>
<div class="a mono" style="left:937.336px;top:1159.48px"><span class="cm">// Call the function immediately to initialize the display</span></div>
<div class="a mono ln" style="left:805px;top:1190.7600000000002px">59</div>
<div class="a mono" style="left:937.336px;top:1190.7600000000002px"><span class="wh2">calculateRemainingTime</span><span class="p1">()</span><span class="w">;</span></div>
<div class="a mono ln" style="left:805px;top:1222.04px">60</div>
<div class="a mono ln" style="left:805px;top:1253.3200000000002px">61</div>
<div class="a mono" style="left:937.336px;top:1253.3200000000002px"><span class="cm">// Update the remaining time every second</span></div>
<div class="a mono ln" style="left:805px;top:1284.6px">62</div>
<div class="a mono" style="left:937.336px;top:1284.6px"><span class="wh2">setInterval</span><span class="p1">(</span><span class="wh2">calculateRemainingTime</span><span class="w">, </span><span class="nu">1000</span><span class="p1">)</span><span class="w">;</span></div>
<div class="a mono ln" style="left:805px;top:1315.88px">63</div>
<div class="a" style="left:796px;top:1386px;width:1124px;height:100px;background:#1f1e23"></div>
<div class="a" style="left:796px;top:1386px;width:1124px;height:2.5px;background:#0b0b0c"></div>
<div class="a ui" style="left:1304px;top:1409px;font-size:19px;color:#e8e8e8">TERMINAL</div>
<div class="a" style="left:1290px;top:1439.5px;width:115px;height:2.2px;background:#e8e8e8"></div>
<div class="a ui" style="left:1443px;top:1409px;font-size:19px;color:#a3a3a3">PORTS</div>
<div class="a mono" style="left:1297px;top:1464px;font-size:19.9px;color:#cfcfcf">ion renderer process code <span style="color:#8a8a8a">[0.4s]</span></div>
<div class="a" style="left:573px;top:837px;width:734px;height:700px;border-radius:18px 18px 0 0;background:#352e2b;box-shadow:0 0 0 1px rgba(0,0,0,.7),0 20px 60px rgba(0,0,0,.55)"></div>
<div class="a" style="left:573px;top:838px;width:734px;height:40px;border-radius:18px 18px 0 0;border-top:1.5px solid #77706d;border-left:1px solid #5a5350;border-right:1px solid #5a5350"></div>
<div class="a" style="left:573px;top:886px;width:734px;height:1px;background:#151312"></div>
<div class="a" style="left:573px;top:887px;width:734px;height:600px;background:#ffffff"></div>
<div class="a" style="left:587.1px;top:851.3000000000001px;width:20.8px;height:20.8px;border-radius:50%;background:#5d5350"></div>
<div class="a" style="left:621.9px;top:851.3000000000001px;width:20.8px;height:20.8px;border-radius:50%;background:#5d5350"></div>
<div class="a" style="left:656.85px;top:851.3000000000001px;width:20.8px;height:20.8px;border-radius:50%;background:#5d5350"></div>
<div class="a ui" style="left:573px;width:734px;text-align:center;top:851px;font-size:23.5px;font-weight:700;color:#878483">Hello World!</div>
<div class="a ui" style="left:628.5px;top:973.5px;font-size:27.8px;color:#000">Remaining time:</div>
<div class="a ui" style="left:629px;top:1047px;font-size:56.7px;font-weight:700;letter-spacing:-0.45px;color:#000">02:18:01</div>
</body></html>
